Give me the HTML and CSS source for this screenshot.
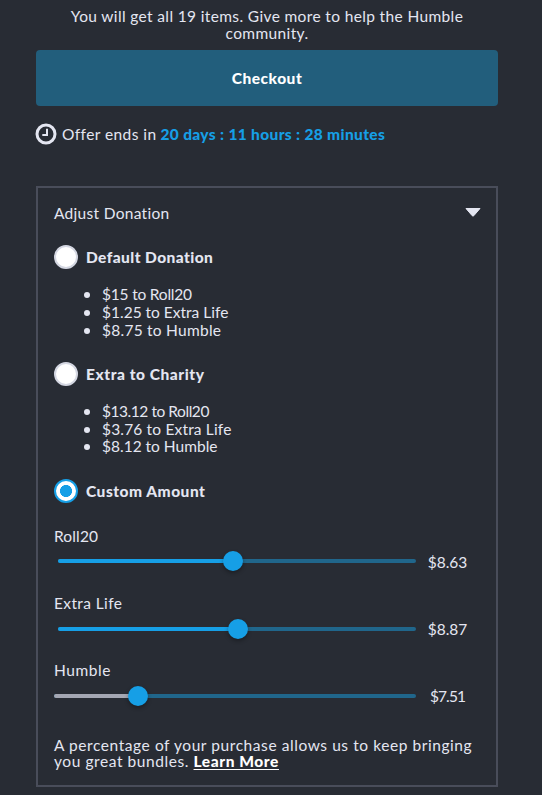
FILE: index.html
```html
<!DOCTYPE html>
<html lang="en">
<head>
<meta charset="utf-8">
<title>Checkout</title>
<link rel="stylesheet" href="styles.css">
</head>
<body>
<main class="checkout">
  <p class="summary">You will get all 19 items. Give more to help the Humble community.</p>
  <button class="checkout-button" type="button">Checkout</button>
  <div class="offer">
    <svg class="clock" viewBox="0 0 22 22"><circle cx="11" cy="11" r="9" fill="none" stroke="#e4e6f1" stroke-width="3"/><path d="M12 5.8V12H7.3" fill="none" stroke="#e4e6f1" stroke-width="2"/></svg>
    <span class="offer-label">Offer ends in</span>
    <strong class="countdown">20 days : 11 hours : 28 minutes</strong>
  </div>
  <section class="donation">
    <header class="donation-head">
      <span class="donation-title">Adjust Donation</span>
      <svg class="caret" viewBox="0 0 16 9"><path d="M1 .5H15L8.8 7.7Q8 8.6 7.2 7.7Z" fill="#e4e6f1" stroke="#e4e6f1" stroke-linejoin="round"/></svg>
    </header>
    <div class="option"><span class="radio"></span><span class="option-name default-name">Default Donation</span></div>
    <ul class="split"><li class="tight">$15 to Roll20</li><li>$1.25 to Extra Life</li><li class="wide">$8.75 to Humble</li></ul>
    <div class="option"><span class="radio"></span><span class="option-name charity-name">Extra to Charity</span></div>
    <ul class="split split-charity"><li class="tighter">$13.12 to Roll20</li><li class="roomy">$3.76 to Extra Life</li><li>$8.12 to Humble</li></ul>
    <div class="option"><span class="radio checked"></span><span class="option-name custom-name">Custom Amount</span></div>
    <div class="sliders">
      <div class="slider">
        <span class="slider-name roll-name">Roll20</span>
        <div class="slider-row"><div class="track inset"><div class="fill" style="width:174.5px"></div><div class="knob"></div></div><span class="amount">$8.63</span></div>
      </div>
      <div class="slider">
        <span class="slider-name life-name">Extra Life</span>
        <div class="slider-row low"><div class="track inset"><div class="fill" style="width:179.5px"></div><div class="knob"></div></div><span class="amount raised">$8.87</span></div>
      </div>
      <div class="slider">
        <span class="slider-name humble-name">Humble</span>
        <div class="slider-row low"><div class="track"><div class="fill muted" style="width:84.4px"></div><div class="knob"></div></div><span class="amount raised narrow">$7.51</span></div>
      </div>
    </div>
    <p class="note">A percentage of your purchase allows us to keep bringing<br>you great bundles. <a class="learn" href="#">Learn More</a></p>
  </section>
</main>
</body>
</html>
```

FILE: styles.css
```css
* { box-sizing: border-box; }
body {
  margin: 0;
  background: #282c34;
  color: #e4e6f1;
  font: 15.5px/18px Lato, "Open Sans", sans-serif;
  font-variant-ligatures: none;
}
p, ul { margin: 0; }
.checkout { width: 462px; margin-left: 36px; padding-top: 8px; }
.summary { padding: 0 24px; line-height: 17px; text-align: center; letter-spacing: .36px; }
.checkout-button {
  display: block;
  width: 100%;
  height: 56px;
  margin-top: 8px;
  padding: 0;
  border: 0;
  border-radius: 4px;
  background: #225e7c;
  color: #fff;
  font: 900 15.5px/18px Lato, "Open Sans", sans-serif;
  letter-spacing: .5px;
}
.offer { display: flex; align-items: center; height: 22px; margin: 17px 0 0 -1px; white-space: nowrap; }
.clock { width: 22px; height: 22px; margin-right: 5px; }
.offer-label { letter-spacing: .42px; }
.countdown { margin-left: 4px; color: #169fe6; font-weight: 900; letter-spacing: .34px; }
.donation { height: 601px; margin-top: 41px; padding: 16px; border: 2px solid #494d5a; }
.donation-head { display: flex; justify-content: space-between; height: 41px; }
.donation-title { letter-spacing: .3px; }
.caret { width: 16px; height: 9px; margin: 4px -1px 0 0; }
.option { display: flex; align-items: center; height: 24px; }
.radio { width: 24px; height: 24px; margin-right: 8px; border: 2px solid #d4d7e2; border-radius: 50%; background: #fff; }
.radio.checked { border-color: #169fe6; background: radial-gradient(circle, #169fe6 5.7px, #fff 6.3px); }
.option-name { font-weight: 900; }
.default-name { letter-spacing: .42px; }
.charity-name { letter-spacing: .55px; }
.custom-name { letter-spacing: .5px; }
.split { height: 93px; padding: 16px 0 0 30px; list-style: none; }
.split li { display: flex; align-items: center; }
.split li::before { content: ""; width: 6px; height: 6px; margin: 2px 12px 0 0; border-radius: 50%; background: #e4e6f1; }
.split-charity li:last-child { margin-top: -1px; }
.tight { letter-spacing: -.2px; }
.tighter { letter-spacing: -.45px; }
.wide { letter-spacing: .25px; }
.roomy { letter-spacing: .17px; }
.sliders { padding-top: 24px; }
.slider { height: 67px; }
.slider-name { display: block; height: 27px; }
.roll-name { letter-spacing: .15px; }
.life-name { letter-spacing: .38px; }
.humble-name { letter-spacing: .55px; }
.slider-row { display: flex; align-items: center; height: 14px; }
.slider-row.low { height: 16px; }
.track { display: flex; align-items: center; width: 362px; height: 4px; border-radius: 2px; background: #20668b; }
.track.inset { width: 358px; margin-left: 4px; }
.fill { height: 4px; border-radius: 2px; background: #169fe6; }
.fill.muted { background: #a4a7b3; }
.knob { flex: none; width: 20px; height: 20px; margin-left: -10px; border-radius: 50%; background: #169fe6; box-shadow: 0 2px 4px #0005; }
.amount { width: 63px; padding-top: 2px; text-align: center; }
.amount.raised { padding-top: 0; }
.amount.narrow { letter-spacing: -.9px; }
.note { margin-top: 9px; line-height: 16px; letter-spacing: .57px; white-space: nowrap; }
.learn { color: #fff; font-weight: 900; text-underline-offset: 2px; text-decoration-thickness: 1px; }
```
